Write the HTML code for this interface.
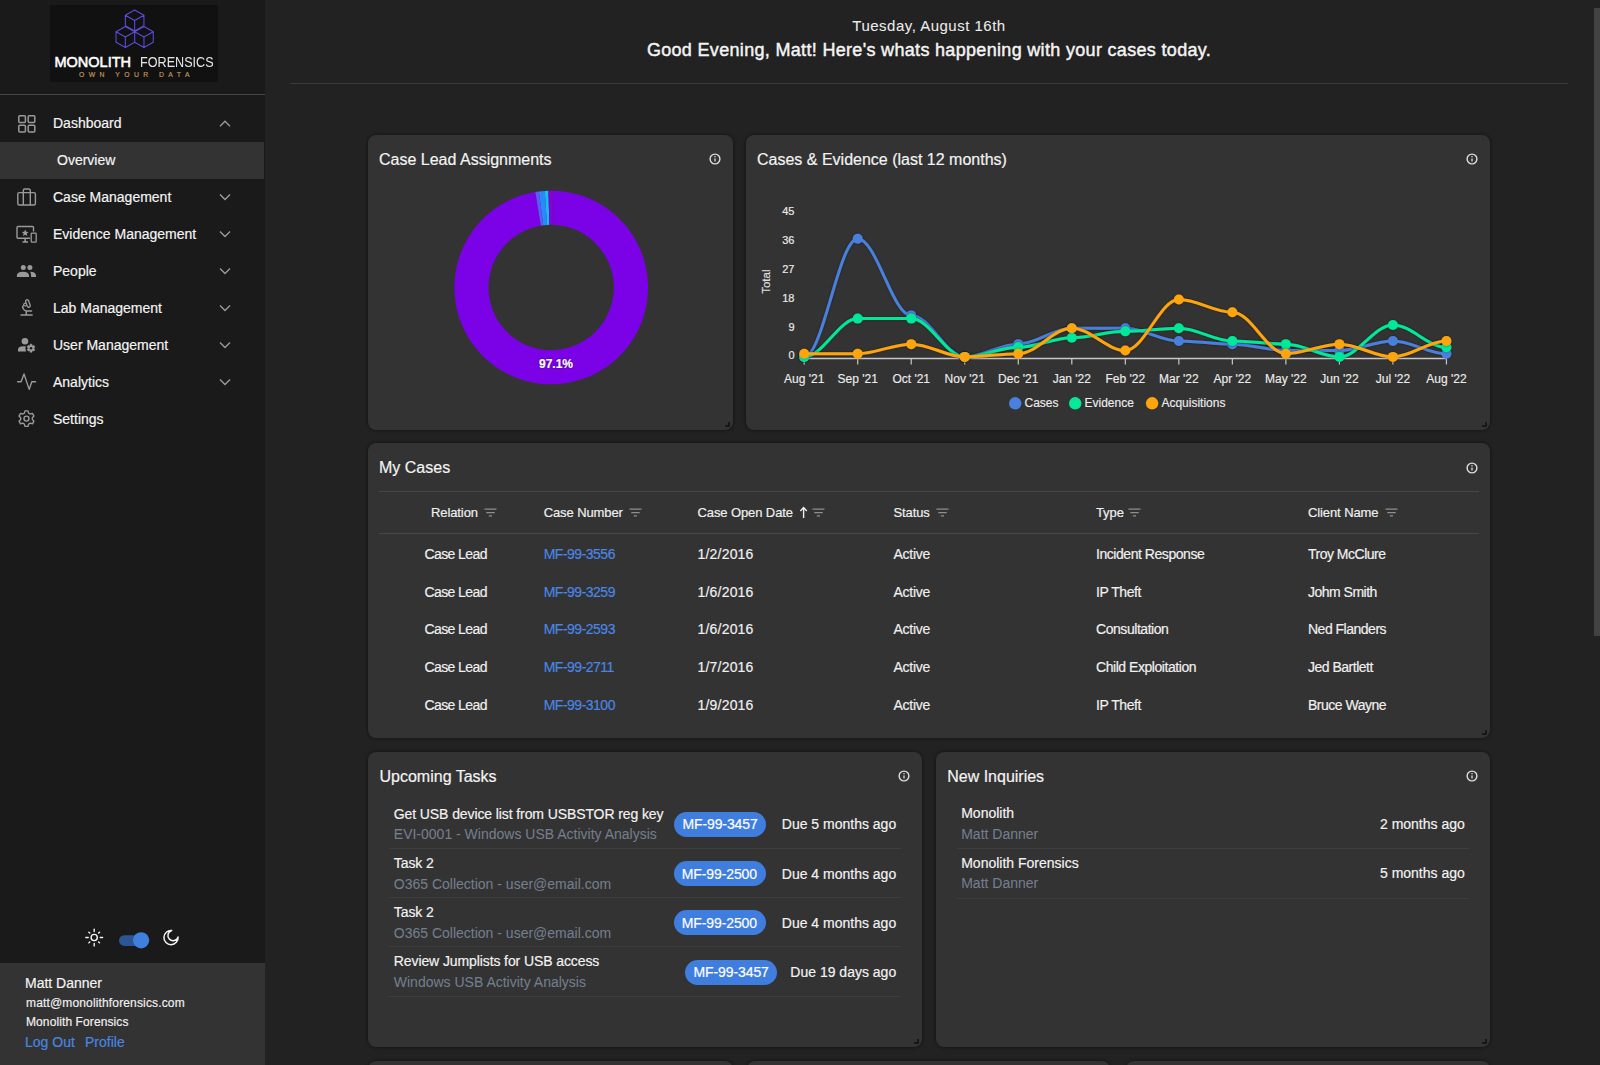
<!DOCTYPE html><html><head><meta charset="utf-8"><style>
*{margin:0;padding:0;box-sizing:border-box}
html,body{width:1600px;height:1065px;overflow:hidden;background:#222222;font-family:"Liberation Sans",sans-serif}
.t{position:absolute;white-space:nowrap;-webkit-text-stroke-width:0.18px}
.abs{position:absolute}
#sb{position:absolute;left:0;top:0;width:265px;height:1065px;background:#1a1a1a}
.card{position:absolute;background:#333333;border-radius:8px;box-shadow:0 0 3px 1px rgba(0,0,0,0.35)}
.hl{position:absolute;height:1px;background:#444}
.rz{position:absolute;width:6px;height:6px;border-right:2px solid #1c1c1c;border-bottom:2px solid #1c1c1c}
</style></head><body>
<div id="sb"></div>
<div class="abs" style="left:50px;top:5px;width:168px;height:77px;background:#111111"></div>
<svg class="abs" style="left:0;top:0" width="264" height="90"><path d="M134.65,9.9 L143.95000000000002,15.2 L143.95000000000002,25.799999999999997 L134.65,31.1 L125.35000000000001,25.799999999999997 L125.35000000000001,15.2 Z M125.35000000000001,15.2 L134.65,20.5 L143.95000000000002,15.2 M134.65,20.5 L134.65,31.1 M125.35,26.4 L134.65,31.7 L134.65,42.3 L125.35,47.6 L116.05,42.3 L116.05,31.7 Z M116.05,31.7 L125.35,37.0 L134.65,31.7 M125.35,37.0 L125.35,47.6 M143.95,26.4 L153.25,31.7 L153.25,42.3 L143.95,47.6 L134.64999999999998,42.3 L134.64999999999998,31.7 Z M134.64999999999998,31.7 L143.95,37.0 L153.25,31.7 M143.95,37.0 L143.95,47.6" fill="none" stroke="#5a4bd8" stroke-width="1.1" stroke-linejoin="round"/></svg>
<div class="t" style="left:54.5px;top:55px;font-size:14.5px;line-height:14.5px;color:#fff;-webkit-text-stroke-width:0.55px">MONOLITH</div>
<div class="t" style="left:139.6px;top:55px;font-size:14.5px;line-height:14.5px;color:#e6e6e6;-webkit-text-stroke-width:0;transform:scaleX(0.87);transform-origin:0 0">FORENSICS</div>
<div class="t" style="left:79px;top:71px;font-size:6.8px;line-height:7px;color:#c49b5c;-webkit-text-stroke-width:0.15px;letter-spacing:4.45px">OWN YOUR DATA</div>
<div class="hl" style="left:0;top:94px;width:265px;height:1px;background:#474747"></div>
<div class="abs" style="left:0;top:142px;width:264px;height:37px;background:#333333"></div>
<div class="t" style="left:53px;top:116px;font-size:14px;line-height:14px;color:#f4f4f4;">Dashboard</div>
<svg class="abs" style="left:0;top:0;overflow:visible" width="1" height="1"><path d="M220,126.3 L225,121.3 L230,126.3" fill="none" stroke="#9a9a9a" stroke-width="1.4"/></svg>
<div class="t" style="left:57px;top:153px;font-size:14px;line-height:14px;color:#f4f4f4;">Overview</div>
<div class="t" style="left:53px;top:190px;font-size:14px;line-height:14px;color:#f4f4f4;">Case Management</div>
<svg class="abs" style="left:0;top:0;overflow:visible" width="1" height="1"><path d="M220,194.5 L225,199.5 L230,194.5" fill="none" stroke="#9a9a9a" stroke-width="1.4"/></svg>
<div class="t" style="left:53px;top:227px;font-size:14px;line-height:14px;color:#f4f4f4;">Evidence Management</div>
<svg class="abs" style="left:0;top:0;overflow:visible" width="1" height="1"><path d="M220,231.5 L225,236.5 L230,231.5" fill="none" stroke="#9a9a9a" stroke-width="1.4"/></svg>
<div class="t" style="left:53px;top:264px;font-size:14px;line-height:14px;color:#f4f4f4;">People</div>
<svg class="abs" style="left:0;top:0;overflow:visible" width="1" height="1"><path d="M220,268.5 L225,273.5 L230,268.5" fill="none" stroke="#9a9a9a" stroke-width="1.4"/></svg>
<div class="t" style="left:53px;top:301px;font-size:14px;line-height:14px;color:#f4f4f4;">Lab Management</div>
<svg class="abs" style="left:0;top:0;overflow:visible" width="1" height="1"><path d="M220,305.5 L225,310.5 L230,305.5" fill="none" stroke="#9a9a9a" stroke-width="1.4"/></svg>
<div class="t" style="left:53px;top:338px;font-size:14px;line-height:14px;color:#f4f4f4;">User Management</div>
<svg class="abs" style="left:0;top:0;overflow:visible" width="1" height="1"><path d="M220,342.5 L225,347.5 L230,342.5" fill="none" stroke="#9a9a9a" stroke-width="1.4"/></svg>
<div class="t" style="left:53px;top:375px;font-size:14px;line-height:14px;color:#f4f4f4;">Analytics</div>
<svg class="abs" style="left:0;top:0;overflow:visible" width="1" height="1"><path d="M220,379.5 L225,384.5 L230,379.5" fill="none" stroke="#9a9a9a" stroke-width="1.4"/></svg>
<div class="t" style="left:53px;top:412px;font-size:14px;line-height:14px;color:#f4f4f4;">Settings</div>
<svg class="abs" style="left:0;top:0" width="264" height="440"><rect x="18.8" y="115.8" width="6.6" height="6.6" rx="1" fill="none" stroke="#9a9a9a" stroke-width="1.5"/><rect x="28.2" y="115.8" width="6.6" height="6.6" rx="1" fill="none" stroke="#9a9a9a" stroke-width="1.5"/><rect x="18.8" y="125.3" width="6.6" height="6.6" rx="1" fill="none" stroke="#9a9a9a" stroke-width="1.5"/><rect x="28.2" y="125.3" width="6.6" height="6.6" rx="1" fill="none" stroke="#9a9a9a" stroke-width="1.5"/><rect x="17.8" y="192.6" width="17.6" height="12.4" rx="1.5" fill="none" stroke="#9a9a9a" stroke-width="1.4"/><path d="M23.3,205 V190.5 a1.5,1.5 0 0 1 1.5,-1.5 H28.8 a1.5,1.5 0 0 1 1.5,1.5 V205" fill="none" stroke="#9a9a9a" stroke-width="1.4"/><path d="M33.5,231.5 V227.5 a1,1 0 0 0 -1,-1 H18 a1,1 0 0 0 -1,1 V237.3 a1,1 0 0 0 1,1 H30" fill="none" stroke="#9a9a9a" stroke-width="1.4"/><path d="M25.2,229.5 l1,2.3 2.4,0.2 -1.8,1.6 0.6,2.4 -2.2,-1.3 -2.2,1.3 0.6,-2.4 -1.8,-1.6 2.4,-0.2 z" fill="#9a9a9a"/><path d="M22.5,242 H28 M25.2,238.5 V242" stroke="#9a9a9a" stroke-width="1.6"/><rect x="31.2" y="233.2" width="5" height="9" rx="0.8" fill="none" stroke="#9a9a9a" stroke-width="1.3"/><circle cx="23.3" cy="267.4" r="2.5" fill="#9a9a9a"/><circle cx="29.9" cy="267.4" r="2.5" fill="#9a9a9a"/><path d="M16.9,277 V275.6 Q16.9,271.8 23,271.8 Q29,271.8 29,275.6 V277 Z" fill="#9a9a9a"/><path d="M30.1,271.85 Q36,271.9 36,275.6 V277 H31.1 V275.6 Q31.1,273.2 30.1,271.85 Z" fill="#9a9a9a"/><path d="M21,314.9 H32.1" stroke="#9a9a9a" stroke-width="1.5" stroke-linecap="round"/><path d="M26.3,311 V314.9" stroke="#9a9a9a" stroke-width="1.5"/><path d="M23.8,304.6 A4.2,3.9 0 0 0 26.6,311 H31.6" fill="none" stroke="#9a9a9a" stroke-width="1.4" stroke-linecap="round"/><rect x="-1.55" y="-3.9" width="3.1" height="7.8" rx="1.55" transform="translate(27.9,303.5) rotate(-20)" fill="none" stroke="#9a9a9a" stroke-width="1.3"/><circle cx="25.2" cy="304.5" r="1.4" fill="#1a1a1a" stroke="#9a9a9a" stroke-width="1.1"/><circle cx="24.95" cy="341.3" r="3.3" fill="#9a9a9a"/><path d="M18,351.6 V349.6 Q18,346.2 23.5,346.2 H25.6 Q25.2,349 26,351.6 Z" fill="#9a9a9a"/><path d="M29.70,345.95 L30.08,344.21 L31.92,344.21 L32.30,345.95 L32.30,345.95 L34.00,345.40 L34.92,347.00 L33.60,348.20 L33.60,348.20 L34.92,349.40 L34.00,351.00 L32.30,350.45 L32.30,350.45 L31.92,352.19 L30.08,352.19 L29.70,350.45 L29.70,350.45 L28.00,351.00 L27.08,349.40 L28.40,348.20 L28.40,348.20 L27.08,347.00 L28.00,345.40 L29.70,345.95Z" fill="#9a9a9a" stroke="#9a9a9a" stroke-width="0.6" stroke-linejoin="round"/><circle cx="31" cy="348.2" r="1.2" fill="#1a1a1a"/><path d="M17.6,381.7 H21.1 L24,373.9 L29.2,389.4 L31.8,381.7 H35.6" fill="none" stroke="#9a9a9a" stroke-width="1.4" stroke-linejoin="round" stroke-linecap="round"/><path d="M24.39,413.09 L24.99,410.85 L28.01,410.85 L28.61,413.09 L30.21,414.01 L32.46,413.42 L33.97,416.03 L32.33,417.68 L32.33,419.52 L33.97,421.17 L32.46,423.78 L30.21,423.19 L28.61,424.11 L28.01,426.35 L24.99,426.35 L24.39,424.11 L22.79,423.19 L20.54,423.78 L19.03,421.17 L20.67,419.52 L20.67,417.68 L19.03,416.03 L20.54,413.42 L22.79,414.01Z" fill="none" stroke="#9a9a9a" stroke-width="1.4" stroke-linejoin="round"/><circle cx="26.5" cy="418.6" r="2.5" fill="none" stroke="#9a9a9a" stroke-width="1.4"/></svg>
<svg class="abs" style="left:0;top:900px" width="264" height="60" viewBox="0 900 264 60"><circle cx="94.2" cy="937.5" r="3.1" fill="none" stroke="#f4f4f4" stroke-width="1.4"/><path d="M100.20,937.50 L102.60,937.50 M98.65,941.95 L99.57,942.87 M94.20,943.50 L94.20,945.90 M89.75,941.95 L88.83,942.87 M88.20,937.50 L85.80,937.50 M89.75,933.05 L88.83,932.13 M94.20,931.50 L94.20,929.10 M98.65,933.05 L99.57,932.13" stroke="#f4f4f4" stroke-width="1.4" stroke-linecap="round"/><rect x="119" y="935.3" width="29" height="10.6" rx="5.3" fill="#2b5593"/><circle cx="141.1" cy="940.3" r="8.1" fill="#4080dc"/><path d="M171.7,930.5 A7.1,7.1 0 1 0 178.1,937.0 A5.2,5.2 0 1 1 171.7,930.5 Z" fill="none" stroke="#f4f4f4" stroke-width="1.5" stroke-linejoin="round"/></svg>
<div class="abs" style="left:0;top:963px;width:265px;height:102px;background:#333333"></div>
<div class="t" style="left:25px;top:976px;font-size:14px;line-height:14px;color:#f4f4f4;">Matt Danner</div>
<div class="t" style="left:26px;top:997px;font-size:12px;line-height:12px;color:#f0f0f0;letter-spacing:0.15px">matt@monolithforensics.com</div>
<div class="t" style="left:26px;top:1016px;font-size:12px;line-height:12px;color:#f0f0f0;letter-spacing:0.1px">Monolith Forensics</div>
<div class="t" style="left:25px;top:1035px;font-size:14px;line-height:14px;color:#4a86e0;">Log Out</div>
<div class="t" style="left:85px;top:1035px;font-size:14px;line-height:14px;color:#4a86e0;">Profile</div>
<div class="t" style="left:529px;width:800px;text-align:center;top:18px;font-size:15px;line-height:15px;color:#ececec;letter-spacing:0.5px;-webkit-text-stroke-width:0.05px">Tuesday, August 16th</div>
<div class="t" style="left:529px;width:800px;text-align:center;top:40.5px;font-size:18px;line-height:18px;color:#f4f4f4;letter-spacing:0.32px;-webkit-text-stroke-width:0.45px">Good Evening, Matt! Here's whats happening with your cases today.</div>
<div class="hl" style="left:290px;top:83px;width:1278px;background:#3a3a3a"></div>
<div class="abs" style="left:1594px;top:8px;width:6px;height:628px;background:#424242"></div>
<div class="card" style="left:368px;top:135px;width:365px;height:295px"></div>
<svg class="abs" style="left:723.7px;top:420.7px" width="6" height="6"><path d="M5,1 V5 H1" fill="none" stroke="#111111" stroke-width="1.5"/></svg>
<div class="t" style="left:379px;top:151.5px;font-size:16px;line-height:16px;color:#f4f4f4;">Case Lead Assignments</div>
<svg class="abs" style="left:706.5px;top:151px" width="16" height="16"><circle cx="8" cy="8" r="4.9" fill="none" stroke="#dedede" stroke-width="1.4"/><circle cx="8" cy="5.7" r="0.75" fill="#dedede"/><path d="M8,7.4 V10.6" stroke="#dedede" stroke-width="1.3"/></svg>
<svg class="abs" style="left:0;top:0" width="1600" height="440"><path d="M552.80,190.71 A96.8,96.8 0 1 1 535.31,192.01 L540.91,225.65 A62.7,62.7 0 1 0 552.24,224.81 Z" fill="#7b02e6"/><path d="M535.31,192.01 A96.8,96.8 0 0 1 538.90,191.48 L543.23,225.31 A62.7,62.7 0 0 0 540.91,225.65 Z" fill="#5a5cf5"/><path d="M538.90,191.48 A96.8,96.8 0 0 1 544.78,190.91 L547.04,224.94 A62.7,62.7 0 0 0 543.23,225.31 Z" fill="#2a88fb"/><path d="M544.78,190.91 A96.8,96.8 0 0 1 548.40,190.74 L549.38,224.83 A62.7,62.7 0 0 0 547.04,224.94 Z" fill="#12c0f2"/><path d="M548.40,190.74 A96.8,96.8 0 0 1 551.20,190.70 L551.20,224.80 A62.7,62.7 0 0 0 549.38,224.83 Z" fill="#8200e6"/><path d="M551.20,190.70 A96.8,96.8 0 0 1 552.80,190.71 L552.24,224.81 A62.7,62.7 0 0 0 551.20,224.80 Z" fill="#9300d4"/></svg>
<div class="t" style="left:539px;top:358px;font-size:12px;line-height:12px;font-weight:bold;color:#fff;text-shadow:0 0 2px rgba(0,0,0,0.6)">97.1%</div>
<div class="card" style="left:746px;top:135px;width:744px;height:295px"></div>
<svg class="abs" style="left:1480.7px;top:420.7px" width="6" height="6"><path d="M5,1 V5 H1" fill="none" stroke="#111111" stroke-width="1.5"/></svg>
<div class="t" style="left:757px;top:151.5px;font-size:16px;line-height:16px;color:#f4f4f4;">Cases &amp; Evidence (last 12 months)</div>
<svg class="abs" style="left:1464.4px;top:151px" width="16" height="16"><circle cx="8" cy="8" r="4.9" fill="none" stroke="#dedede" stroke-width="1.4"/><circle cx="8" cy="5.7" r="0.75" fill="#dedede"/><path d="M8,7.4 V10.6" stroke="#dedede" stroke-width="1.3"/></svg>
<svg class="abs" style="left:0;top:0" width="1600" height="440"><defs><filter id="sh" x="-5%" y="-20%" width="110%" height="140%"><feDropShadow dx="0" dy="0" stdDeviation="1" flood-color="#000" flood-opacity="0.5"/></filter></defs><text x="794.5" y="215.0" text-anchor="end" font-family="Liberation Sans" font-size="11" fill="#e8e8e8" stroke="#e8e8e8" stroke-width="0.2">45</text><text x="794.5" y="243.7" text-anchor="end" font-family="Liberation Sans" font-size="11" fill="#e8e8e8" stroke="#e8e8e8" stroke-width="0.2">36</text><text x="794.5" y="272.5" text-anchor="end" font-family="Liberation Sans" font-size="11" fill="#e8e8e8" stroke="#e8e8e8" stroke-width="0.2">27</text><text x="794.5" y="301.6" text-anchor="end" font-family="Liberation Sans" font-size="11" fill="#e8e8e8" stroke="#e8e8e8" stroke-width="0.2">18</text><text x="794.5" y="330.8" text-anchor="end" font-family="Liberation Sans" font-size="11" fill="#e8e8e8" stroke="#e8e8e8" stroke-width="0.2">9</text><text x="794.5" y="359.4" text-anchor="end" font-family="Liberation Sans" font-size="11" fill="#e8e8e8" stroke="#e8e8e8" stroke-width="0.2">0</text><text transform="translate(770.2,281.7) rotate(-90)" text-anchor="middle" font-family="Liberation Sans" font-size="11.5" fill="#e0e0e0" stroke="#e0e0e0" stroke-width="0.15">Total</text><path d="M804,358.6 H1447" stroke="#c8c8c8" stroke-width="1.5"/><path d="M804.20,358.6 V364.5" stroke="#c8c8c8" stroke-width="1.2"/><text x="804.20" y="383" text-anchor="middle" font-family="Liberation Sans" font-size="12" fill="#ececec" stroke="#ececec" stroke-width="0.15">Aug '21</text><path d="M857.72,358.6 V364.5" stroke="#c8c8c8" stroke-width="1.2"/><text x="857.72" y="383" text-anchor="middle" font-family="Liberation Sans" font-size="12" fill="#ececec" stroke="#ececec" stroke-width="0.15">Sep '21</text><path d="M911.24,358.6 V364.5" stroke="#c8c8c8" stroke-width="1.2"/><text x="911.24" y="383" text-anchor="middle" font-family="Liberation Sans" font-size="12" fill="#ececec" stroke="#ececec" stroke-width="0.15">Oct '21</text><path d="M964.76,358.6 V364.5" stroke="#c8c8c8" stroke-width="1.2"/><text x="964.76" y="383" text-anchor="middle" font-family="Liberation Sans" font-size="12" fill="#ececec" stroke="#ececec" stroke-width="0.15">Nov '21</text><path d="M1018.28,358.6 V364.5" stroke="#c8c8c8" stroke-width="1.2"/><text x="1018.28" y="383" text-anchor="middle" font-family="Liberation Sans" font-size="12" fill="#ececec" stroke="#ececec" stroke-width="0.15">Dec '21</text><path d="M1071.80,358.6 V364.5" stroke="#c8c8c8" stroke-width="1.2"/><text x="1071.80" y="383" text-anchor="middle" font-family="Liberation Sans" font-size="12" fill="#ececec" stroke="#ececec" stroke-width="0.15">Jan '22</text><path d="M1125.32,358.6 V364.5" stroke="#c8c8c8" stroke-width="1.2"/><text x="1125.32" y="383" text-anchor="middle" font-family="Liberation Sans" font-size="12" fill="#ececec" stroke="#ececec" stroke-width="0.15">Feb '22</text><path d="M1178.84,358.6 V364.5" stroke="#c8c8c8" stroke-width="1.2"/><text x="1178.84" y="383" text-anchor="middle" font-family="Liberation Sans" font-size="12" fill="#ececec" stroke="#ececec" stroke-width="0.15">Mar '22</text><path d="M1232.36,358.6 V364.5" stroke="#c8c8c8" stroke-width="1.2"/><text x="1232.36" y="383" text-anchor="middle" font-family="Liberation Sans" font-size="12" fill="#ececec" stroke="#ececec" stroke-width="0.15">Apr '22</text><path d="M1285.88,358.6 V364.5" stroke="#c8c8c8" stroke-width="1.2"/><text x="1285.88" y="383" text-anchor="middle" font-family="Liberation Sans" font-size="12" fill="#ececec" stroke="#ececec" stroke-width="0.15">May '22</text><path d="M1339.40,358.6 V364.5" stroke="#c8c8c8" stroke-width="1.2"/><text x="1339.40" y="383" text-anchor="middle" font-family="Liberation Sans" font-size="12" fill="#ececec" stroke="#ececec" stroke-width="0.15">Jun '22</text><path d="M1392.92,358.6 V364.5" stroke="#c8c8c8" stroke-width="1.2"/><text x="1392.92" y="383" text-anchor="middle" font-family="Liberation Sans" font-size="12" fill="#ececec" stroke="#ececec" stroke-width="0.15">Jul '22</text><path d="M1446.44,358.6 V364.5" stroke="#c8c8c8" stroke-width="1.2"/><text x="1446.44" y="383" text-anchor="middle" font-family="Liberation Sans" font-size="12" fill="#ececec" stroke="#ececec" stroke-width="0.15">Aug '22</text><g filter="url(#sh)"><path d="M804.20,356.90 C822.93,356.90 838.99,238.80 857.72,238.80 C876.45,238.80 892.51,315.40 911.24,315.40 C929.97,315.40 946.03,356.90 964.76,356.90 C983.49,356.90 999.55,344.13 1018.28,344.13 C1037.01,344.13 1053.07,328.17 1071.80,328.17 C1090.53,328.17 1106.59,328.17 1125.32,328.17 C1144.05,328.17 1160.11,340.94 1178.84,340.94 C1197.57,340.94 1213.63,344.13 1232.36,344.13 C1251.09,344.13 1267.15,350.52 1285.88,350.52 C1304.61,350.52 1320.67,350.52 1339.40,350.52 C1358.13,350.52 1374.19,340.94 1392.92,340.94 C1411.65,340.94 1427.71,353.71 1446.44,353.71" fill="none" stroke="#4a80dd" stroke-width="3" stroke-linecap="round"/><circle cx="804.20" cy="356.90" r="5" fill="#4a80dd"/><circle cx="857.72" cy="238.80" r="5" fill="#4a80dd"/><circle cx="911.24" cy="315.40" r="5" fill="#4a80dd"/><circle cx="964.76" cy="356.90" r="5" fill="#4a80dd"/><circle cx="1018.28" cy="344.13" r="5" fill="#4a80dd"/><circle cx="1071.80" cy="328.17" r="5" fill="#4a80dd"/><circle cx="1125.32" cy="328.17" r="5" fill="#4a80dd"/><circle cx="1178.84" cy="340.94" r="5" fill="#4a80dd"/><circle cx="1232.36" cy="344.13" r="5" fill="#4a80dd"/><circle cx="1285.88" cy="350.52" r="5" fill="#4a80dd"/><circle cx="1339.40" cy="350.52" r="5" fill="#4a80dd"/><circle cx="1392.92" cy="340.94" r="5" fill="#4a80dd"/><circle cx="1446.44" cy="353.71" r="5" fill="#4a80dd"/></g><g filter="url(#sh)"><path d="M804.20,356.90 C822.93,356.90 838.99,318.60 857.72,318.60 C876.45,318.60 892.51,318.60 911.24,318.60 C929.97,318.60 946.03,356.90 964.76,356.90 C983.49,356.90 999.55,347.32 1018.28,347.32 C1037.01,347.32 1053.07,337.75 1071.80,337.75 C1090.53,337.75 1106.59,331.36 1125.32,331.36 C1144.05,331.36 1160.11,328.17 1178.84,328.17 C1197.57,328.17 1213.63,340.94 1232.36,340.94 C1251.09,340.94 1267.15,344.13 1285.88,344.13 C1304.61,344.13 1320.67,356.90 1339.40,356.90 C1358.13,356.90 1374.19,324.98 1392.92,324.98 C1411.65,324.98 1427.71,347.32 1446.44,347.32" fill="none" stroke="#06e998" stroke-width="3" stroke-linecap="round"/><circle cx="804.20" cy="356.90" r="5" fill="#06e998"/><circle cx="857.72" cy="318.60" r="5" fill="#06e998"/><circle cx="911.24" cy="318.60" r="5" fill="#06e998"/><circle cx="964.76" cy="356.90" r="5" fill="#06e998"/><circle cx="1018.28" cy="347.32" r="5" fill="#06e998"/><circle cx="1071.80" cy="337.75" r="5" fill="#06e998"/><circle cx="1125.32" cy="331.36" r="5" fill="#06e998"/><circle cx="1178.84" cy="328.17" r="5" fill="#06e998"/><circle cx="1232.36" cy="340.94" r="5" fill="#06e998"/><circle cx="1285.88" cy="344.13" r="5" fill="#06e998"/><circle cx="1339.40" cy="356.90" r="5" fill="#06e998"/><circle cx="1392.92" cy="324.98" r="5" fill="#06e998"/><circle cx="1446.44" cy="347.32" r="5" fill="#06e998"/></g><g filter="url(#sh)"><path d="M804.20,353.71 C822.93,353.71 838.99,353.71 857.72,353.71 C876.45,353.71 892.51,344.13 911.24,344.13 C929.97,344.13 946.03,356.90 964.76,356.90 C983.49,356.90 999.55,353.71 1018.28,353.71 C1037.01,353.71 1053.07,328.17 1071.80,328.17 C1090.53,328.17 1106.59,350.52 1125.32,350.52 C1144.05,350.52 1160.11,299.44 1178.84,299.44 C1197.57,299.44 1213.63,312.21 1232.36,312.21 C1251.09,312.21 1267.15,353.71 1285.88,353.71 C1304.61,353.71 1320.67,344.13 1339.40,344.13 C1358.13,344.13 1374.19,356.90 1392.92,356.90 C1411.65,356.90 1427.71,340.94 1446.44,340.94" fill="none" stroke="#fea50e" stroke-width="3" stroke-linecap="round"/><circle cx="804.20" cy="353.71" r="5" fill="#fea50e"/><circle cx="857.72" cy="353.71" r="5" fill="#fea50e"/><circle cx="911.24" cy="344.13" r="5" fill="#fea50e"/><circle cx="964.76" cy="356.90" r="5" fill="#fea50e"/><circle cx="1018.28" cy="353.71" r="5" fill="#fea50e"/><circle cx="1071.80" cy="328.17" r="5" fill="#fea50e"/><circle cx="1125.32" cy="350.52" r="5" fill="#fea50e"/><circle cx="1178.84" cy="299.44" r="5" fill="#fea50e"/><circle cx="1232.36" cy="312.21" r="5" fill="#fea50e"/><circle cx="1285.88" cy="353.71" r="5" fill="#fea50e"/><circle cx="1339.40" cy="344.13" r="5" fill="#fea50e"/><circle cx="1392.92" cy="356.90" r="5" fill="#fea50e"/><circle cx="1446.44" cy="340.94" r="5" fill="#fea50e"/></g><circle cx="1015.2" cy="403.3" r="6.2" fill="#4a80dd"/><text x="1024.5" y="407.3" font-family="Liberation Sans" font-size="12" fill="#ececec" stroke="#ececec" stroke-width="0.15">Cases</text><circle cx="1075.2" cy="403.3" r="6.2" fill="#06e998"/><text x="1084.5" y="407.3" font-family="Liberation Sans" font-size="12" fill="#ececec" stroke="#ececec" stroke-width="0.15">Evidence</text><circle cx="1152.1" cy="403.3" r="6.2" fill="#fea50e"/><text x="1161.4" y="407.3" font-family="Liberation Sans" font-size="12" fill="#ececec" stroke="#ececec" stroke-width="0.15">Acquisitions</text></svg>
<div class="card" style="left:368px;top:443px;width:1122px;height:295px"></div>
<svg class="abs" style="left:1480.7px;top:728.7px" width="6" height="6"><path d="M5,1 V5 H1" fill="none" stroke="#111111" stroke-width="1.5"/></svg>
<div class="t" style="left:379px;top:459.5px;font-size:16px;line-height:16px;color:#f4f4f4;">My Cases</div>
<svg class="abs" style="left:1464px;top:460px" width="16" height="16"><circle cx="8" cy="8" r="4.9" fill="none" stroke="#dedede" stroke-width="1.4"/><circle cx="8" cy="5.7" r="0.75" fill="#dedede"/><path d="M8,7.4 V10.6" stroke="#dedede" stroke-width="1.3"/></svg>
<div class="hl" style="left:379px;top:491px;width:1100px;background:#474747"></div>
<div class="hl" style="left:379px;top:533px;width:1100px;background:#474747"></div>
<div class="t" style="left:431px;top:506px;font-size:13px;line-height:13px;color:#f0f0f0;letter-spacing:-0.1px">Relation</div>
<svg class="abs" style="left:484px;top:505px" width="14" height="14"><path d="M0.5,4.2 H12.5 M2.3,7.7 H10.7 M4.8,10.9 H8" stroke="#8f8f8f" stroke-width="1.3"/></svg>
<div class="t" style="left:543.7px;top:506px;font-size:13px;line-height:13px;color:#f0f0f0;letter-spacing:-0.1px">Case Number</div>
<svg class="abs" style="left:629px;top:505px" width="14" height="14"><path d="M0.5,4.2 H12.5 M2.3,7.7 H10.7 M4.8,10.9 H8" stroke="#8f8f8f" stroke-width="1.3"/></svg>
<div class="t" style="left:697.5px;top:506px;font-size:13px;line-height:13px;color:#f0f0f0;letter-spacing:-0.1px">Case Open Date</div>
<svg class="abs" style="left:812.2px;top:505px" width="14" height="14"><path d="M0.5,4.2 H12.5 M2.3,7.7 H10.7 M4.8,10.9 H8" stroke="#8f8f8f" stroke-width="1.3"/></svg>
<div class="t" style="left:893.5px;top:506px;font-size:13px;line-height:13px;color:#f0f0f0;letter-spacing:-0.1px">Status</div>
<svg class="abs" style="left:936px;top:505px" width="14" height="14"><path d="M0.5,4.2 H12.5 M2.3,7.7 H10.7 M4.8,10.9 H8" stroke="#8f8f8f" stroke-width="1.3"/></svg>
<div class="t" style="left:1096px;top:506px;font-size:13px;line-height:13px;color:#f0f0f0;letter-spacing:-0.1px">Type</div>
<svg class="abs" style="left:1128px;top:505px" width="14" height="14"><path d="M0.5,4.2 H12.5 M2.3,7.7 H10.7 M4.8,10.9 H8" stroke="#8f8f8f" stroke-width="1.3"/></svg>
<div class="t" style="left:1308px;top:506px;font-size:13px;line-height:13px;color:#f0f0f0;letter-spacing:-0.1px">Client Name</div>
<svg class="abs" style="left:1384.5px;top:505px" width="14" height="14"><path d="M0.5,4.2 H12.5 M2.3,7.7 H10.7 M4.8,10.9 H8" stroke="#8f8f8f" stroke-width="1.3"/></svg>
<svg class="abs" style="left:797px;top:505px" width="14" height="14"><path d="M6.6,13 V2.8 M3.4,6 L6.6,2.6 L9.8,6" fill="none" stroke="#f0f0f0" stroke-width="1.4"/></svg>
<div class="t" style="left:424.5px;top:546.7px;font-size:14px;line-height:14px;color:#f0f0f0;letter-spacing:-0.6px">Case Lead</div>
<div class="t" style="left:543.7px;top:546.7px;font-size:14px;line-height:14px;color:#4a86e4;letter-spacing:-0.5px">MF-99-3556</div>
<div class="t" style="left:697.5px;top:546.7px;font-size:14px;line-height:14px;color:#f0f0f0;letter-spacing:0.2px">1/2/2016</div>
<div class="t" style="left:893.5px;top:546.7px;font-size:14px;line-height:14px;color:#f0f0f0;letter-spacing:-0.25px">Active</div>
<div class="t" style="left:1096px;top:546.7px;font-size:14px;line-height:14px;color:#f0f0f0;letter-spacing:-0.45px">Incident Response</div>
<div class="t" style="left:1308px;top:546.7px;font-size:14px;line-height:14px;color:#f0f0f0;letter-spacing:-0.5px">Troy McClure</div>
<div class="t" style="left:424.5px;top:584.5500000000001px;font-size:14px;line-height:14px;color:#f0f0f0;letter-spacing:-0.6px">Case Lead</div>
<div class="t" style="left:543.7px;top:584.5500000000001px;font-size:14px;line-height:14px;color:#4a86e4;letter-spacing:-0.5px">MF-99-3259</div>
<div class="t" style="left:697.5px;top:584.5500000000001px;font-size:14px;line-height:14px;color:#f0f0f0;letter-spacing:0.2px">1/6/2016</div>
<div class="t" style="left:893.5px;top:584.5500000000001px;font-size:14px;line-height:14px;color:#f0f0f0;letter-spacing:-0.25px">Active</div>
<div class="t" style="left:1096px;top:584.5500000000001px;font-size:14px;line-height:14px;color:#f0f0f0;letter-spacing:-0.45px">IP Theft</div>
<div class="t" style="left:1308px;top:584.5500000000001px;font-size:14px;line-height:14px;color:#f0f0f0;letter-spacing:-0.5px">Johm Smith</div>
<div class="t" style="left:424.5px;top:622.4000000000001px;font-size:14px;line-height:14px;color:#f0f0f0;letter-spacing:-0.6px">Case Lead</div>
<div class="t" style="left:543.7px;top:622.4000000000001px;font-size:14px;line-height:14px;color:#4a86e4;letter-spacing:-0.5px">MF-99-2593</div>
<div class="t" style="left:697.5px;top:622.4000000000001px;font-size:14px;line-height:14px;color:#f0f0f0;letter-spacing:0.2px">1/6/2016</div>
<div class="t" style="left:893.5px;top:622.4000000000001px;font-size:14px;line-height:14px;color:#f0f0f0;letter-spacing:-0.25px">Active</div>
<div class="t" style="left:1096px;top:622.4000000000001px;font-size:14px;line-height:14px;color:#f0f0f0;letter-spacing:-0.45px">Consultation</div>
<div class="t" style="left:1308px;top:622.4000000000001px;font-size:14px;line-height:14px;color:#f0f0f0;letter-spacing:-0.5px">Ned Flanders</div>
<div class="t" style="left:424.5px;top:660.25px;font-size:14px;line-height:14px;color:#f0f0f0;letter-spacing:-0.6px">Case Lead</div>
<div class="t" style="left:543.7px;top:660.25px;font-size:14px;line-height:14px;color:#4a86e4;letter-spacing:-0.5px">MF-99-2711</div>
<div class="t" style="left:697.5px;top:660.25px;font-size:14px;line-height:14px;color:#f0f0f0;letter-spacing:0.2px">1/7/2016</div>
<div class="t" style="left:893.5px;top:660.25px;font-size:14px;line-height:14px;color:#f0f0f0;letter-spacing:-0.25px">Active</div>
<div class="t" style="left:1096px;top:660.25px;font-size:14px;line-height:14px;color:#f0f0f0;letter-spacing:-0.45px">Child Exploitation</div>
<div class="t" style="left:1308px;top:660.25px;font-size:14px;line-height:14px;color:#f0f0f0;letter-spacing:-0.5px">Jed Bartlett</div>
<div class="t" style="left:424.5px;top:698.1px;font-size:14px;line-height:14px;color:#f0f0f0;letter-spacing:-0.6px">Case Lead</div>
<div class="t" style="left:543.7px;top:698.1px;font-size:14px;line-height:14px;color:#4a86e4;letter-spacing:-0.5px">MF-99-3100</div>
<div class="t" style="left:697.5px;top:698.1px;font-size:14px;line-height:14px;color:#f0f0f0;letter-spacing:0.2px">1/9/2016</div>
<div class="t" style="left:893.5px;top:698.1px;font-size:14px;line-height:14px;color:#f0f0f0;letter-spacing:-0.25px">Active</div>
<div class="t" style="left:1096px;top:698.1px;font-size:14px;line-height:14px;color:#f0f0f0;letter-spacing:-0.45px">IP Theft</div>
<div class="t" style="left:1308px;top:698.1px;font-size:14px;line-height:14px;color:#f0f0f0;letter-spacing:-0.5px">Bruce Wayne</div>
<div class="card" style="left:368px;top:752px;width:554px;height:295px"></div>
<svg class="abs" style="left:912.7px;top:1037.7px" width="6" height="6"><path d="M5,1 V5 H1" fill="none" stroke="#111111" stroke-width="1.5"/></svg>
<div class="t" style="left:379.5px;top:768.5px;font-size:16px;line-height:16px;color:#f4f4f4;">Upcoming Tasks</div>
<svg class="abs" style="left:896px;top:768.4px" width="16" height="16"><circle cx="8" cy="8" r="4.9" fill="none" stroke="#dedede" stroke-width="1.4"/><circle cx="8" cy="5.7" r="0.75" fill="#dedede"/><path d="M8,7.4 V10.6" stroke="#dedede" stroke-width="1.3"/></svg>
<div class="t" style="left:393.8px;top:806.7px;font-size:14px;line-height:14px;color:#f2f2f2;letter-spacing:-0.1px">Get USB device list from USBSTOR reg key</div>
<div class="t" style="left:393.8px;top:827.4px;font-size:14px;line-height:14px;color:#737f8f;-webkit-text-stroke-width:0.05px">EVI-0001 - Windows USB Activity Analysis</div>
<div class="abs" style="left:674.2px;top:812.0px;width:92px;height:25px;border-radius:13px;background:#3f7ddf"></div>
<div class="t" style="left:682.4000000000001px;top:817.4px;font-size:14px;line-height:14px;color:#ffffff;letter-spacing:-0.1px">MF-99-3457</div>
<div class="t" style="left:496.20000000000005px;width:400px;text-align:right;top:817.4px;font-size:14px;line-height:14px;color:#f2f2f2;">Due 5 months ago</div>
<div class="hl" style="left:389px;top:848.0px;width:512px;background:#3e3e3e"></div>
<div class="t" style="left:393.8px;top:855.9000000000001px;font-size:14px;line-height:14px;color:#f2f2f2;letter-spacing:-0.1px">Task 2</div>
<div class="t" style="left:393.8px;top:876.6px;font-size:14px;line-height:14px;color:#737f8f;-webkit-text-stroke-width:0.05px">O365 Collection - user@email.com</div>
<div class="abs" style="left:673.5px;top:861.2px;width:92px;height:25px;border-radius:13px;background:#3f7ddf"></div>
<div class="t" style="left:681.7px;top:866.6px;font-size:14px;line-height:14px;color:#ffffff;letter-spacing:-0.1px">MF-99-2500</div>
<div class="t" style="left:496.20000000000005px;width:400px;text-align:right;top:866.6px;font-size:14px;line-height:14px;color:#f2f2f2;">Due 4 months ago</div>
<div class="hl" style="left:389px;top:897.2px;width:512px;background:#3e3e3e"></div>
<div class="t" style="left:393.8px;top:905.1px;font-size:14px;line-height:14px;color:#f2f2f2;letter-spacing:-0.1px">Task 2</div>
<div class="t" style="left:393.8px;top:925.8px;font-size:14px;line-height:14px;color:#737f8f;-webkit-text-stroke-width:0.05px">O365 Collection - user@email.com</div>
<div class="abs" style="left:673.5px;top:910.4px;width:92px;height:25px;border-radius:13px;background:#3f7ddf"></div>
<div class="t" style="left:681.7px;top:915.8px;font-size:14px;line-height:14px;color:#ffffff;letter-spacing:-0.1px">MF-99-2500</div>
<div class="t" style="left:496.20000000000005px;width:400px;text-align:right;top:915.8px;font-size:14px;line-height:14px;color:#f2f2f2;">Due 4 months ago</div>
<div class="hl" style="left:389px;top:946.4px;width:512px;background:#3e3e3e"></div>
<div class="t" style="left:393.8px;top:954.3000000000001px;font-size:14px;line-height:14px;color:#f2f2f2;letter-spacing:-0.1px">Review Jumplists for USB access</div>
<div class="t" style="left:393.8px;top:975.0px;font-size:14px;line-height:14px;color:#737f8f;-webkit-text-stroke-width:0.05px">Windows USB Activity Analysis</div>
<div class="abs" style="left:685.3px;top:959.6px;width:92px;height:25px;border-radius:13px;background:#3f7ddf"></div>
<div class="t" style="left:693.5px;top:965.0px;font-size:14px;line-height:14px;color:#ffffff;letter-spacing:-0.1px">MF-99-3457</div>
<div class="t" style="left:496.20000000000005px;width:400px;text-align:right;top:965.0px;font-size:14px;line-height:14px;color:#f2f2f2;">Due 19 days ago</div>
<div class="hl" style="left:389px;top:995.6px;width:512px;background:#3e3e3e"></div>
<div class="card" style="left:936px;top:752px;width:554px;height:295px"></div>
<svg class="abs" style="left:1480.7px;top:1037.7px" width="6" height="6"><path d="M5,1 V5 H1" fill="none" stroke="#111111" stroke-width="1.5"/></svg>
<div class="t" style="left:947.2px;top:768.5px;font-size:16px;line-height:16px;color:#f4f4f4;">New Inquiries</div>
<svg class="abs" style="left:1464px;top:768.4px" width="16" height="16"><circle cx="8" cy="8" r="4.9" fill="none" stroke="#dedede" stroke-width="1.4"/><circle cx="8" cy="5.7" r="0.75" fill="#dedede"/><path d="M8,7.4 V10.6" stroke="#dedede" stroke-width="1.3"/></svg>
<div class="t" style="left:961.2px;top:806.1px;font-size:14px;line-height:14px;color:#f2f2f2;">Monolith</div>
<div class="t" style="left:961.2px;top:826.5px;font-size:14px;line-height:14px;color:#737f8f;-webkit-text-stroke-width:0.05px">Matt Danner</div>
<div class="t" style="left:1064.8px;width:400px;text-align:right;top:816.7px;font-size:14px;line-height:14px;color:#f2f2f2;">2 months ago</div>
<div class="hl" style="left:957px;top:848.0px;width:512px;background:#3e3e3e"></div>
<div class="t" style="left:961.2px;top:855.6px;font-size:14px;line-height:14px;color:#f2f2f2;">Monolith Forensics</div>
<div class="t" style="left:961.2px;top:876.0px;font-size:14px;line-height:14px;color:#737f8f;-webkit-text-stroke-width:0.05px">Matt Danner</div>
<div class="t" style="left:1064.8px;width:400px;text-align:right;top:866.2px;font-size:14px;line-height:14px;color:#f2f2f2;">5 months ago</div>
<div class="hl" style="left:957px;top:897.5px;width:512px;background:#3e3e3e"></div>
<div class="card" style="left:368px;top:1061px;width:365px;height:100px"></div>
<div class="card" style="left:747px;top:1061px;width:363px;height:100px"></div>
<div class="card" style="left:1126px;top:1061px;width:364px;height:100px"></div>
</body></html>
